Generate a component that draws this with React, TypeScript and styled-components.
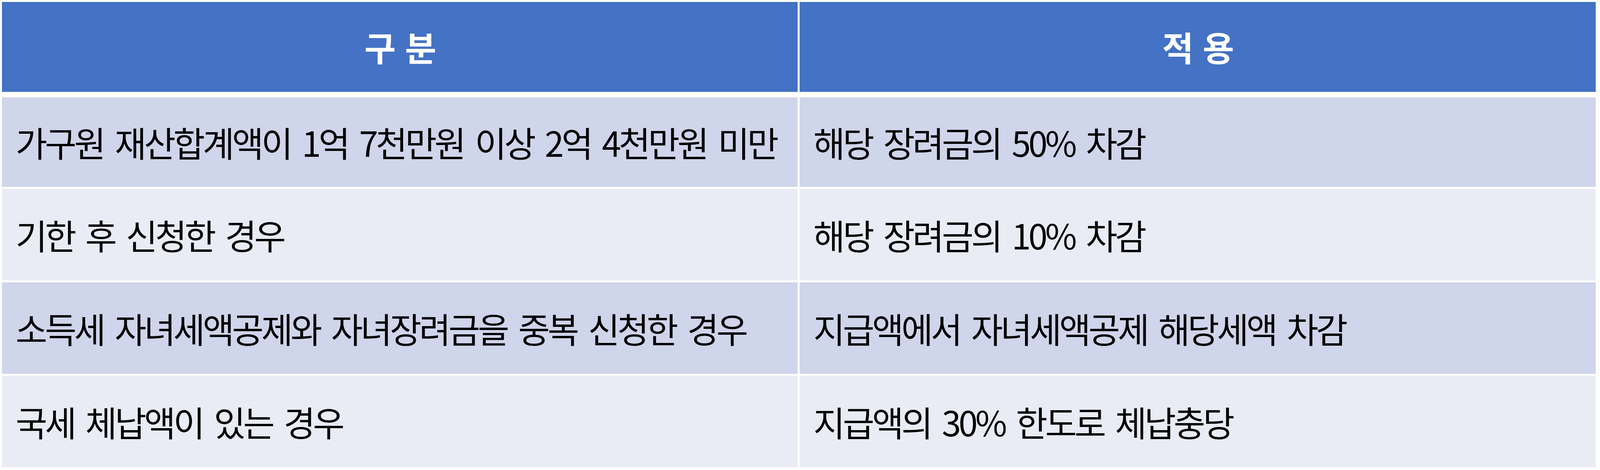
import React from 'react';
import styled, { createGlobalStyle } from 'styled-components';

// design was measured on a 4413px wide frame; scale horizontal values with the viewport
const u = (px: number) => `calc(${px} * 100vw / 4413)`;

const GlobalStyle = createGlobalStyle`
  html, body {
    margin: 0;
    padding: 0;
    background: #ffffff;
    overflow: hidden;
  }
  body {
    font-family: "Noto Sans CJK KR", "Noto Sans", sans-serif;
  }
`;

const Page = styled.div`
  width: 100vw;
  height: 1202px;
  padding: 5px ${u(12)} 0 ${u(5)};
  box-sizing: border-box;
  background: #ffffff;
  overflow: hidden;
`;

const Table = styled.div`
  width: 100%;
  display: flex;
  flex-direction: column;
  gap: 5px;
`;

const Row = styled.div<{ $head?: boolean; $height: number }>`
  display: grid;
  grid-template-columns: minmax(0, 1fr) minmax(0, 1fr);
  column-gap: ${u(5)};
  height: ${(p) => p.$height}px;
  margin-bottom: ${(p) => (p.$head ? 9 : 0)}px;
`;

const HeadCell = styled.div`
  background: #4472c4;
  color: #ffffff;
  display: flex;
  align-items: center;
  justify-content: center;
  font-size: ${u(94)};
  font-weight: 700;
  letter-spacing: ${u(-3)};
  word-spacing: ${u(10)};
  line-height: 1;
`;

const Cell = styled.div<{ $shade: 'dark' | 'light' }>`
  background: ${(p) => (p.$shade === 'dark' ? '#cfd5ea' : '#e9ebf5')};
  color: #000000;
  display: flex;
  align-items: center;
  padding-left: ${u(38)};
  font-size: ${u(95)};
  font-weight: 400;
  letter-spacing: ${u(-6.5)};
  word-spacing: ${u(16)};
  line-height: 1;
  white-space: nowrap;
  overflow: hidden;
`;

const rows: { rule: string; apply: string; height: number }[] = [
  { rule: '가구원 재산합계액이 1억 7천만원 이상 2억 4천만원 미만', apply: '해당 장려금의 50% 차감', height: 229 },
  { rule: '기한 후 신청한 경우', apply: '해당 장려금의 10% 차감', height: 234 },
  { rule: '소득세 자녀세액공제와 자녀장려금을 중복 신청한 경우', apply: '지급액에서 자녀세액공제 해당세액 차감', height: 234 },
  { rule: '국세 체납액이 있는 경우', apply: '지급액의 30% 한도로 체납충당', height: 234 },
];

export default function App() {
  return (
    <Page>
      <GlobalStyle />
      <Table>
        <Row $head $height={230}>
          <HeadCell>구 분</HeadCell>
          <HeadCell>적 용</HeadCell>
        </Row>
        {rows.map((r, i) => (
          <Row key={r.rule} $height={r.height}>
            <Cell $shade={i % 2 === 0 ? 'dark' : 'light'}>{r.rule}</Cell>
            <Cell $shade={i % 2 === 0 ? 'dark' : 'light'}>{r.apply}</Cell>
          </Row>
        ))}
      </Table>
    </Page>
  );
}
